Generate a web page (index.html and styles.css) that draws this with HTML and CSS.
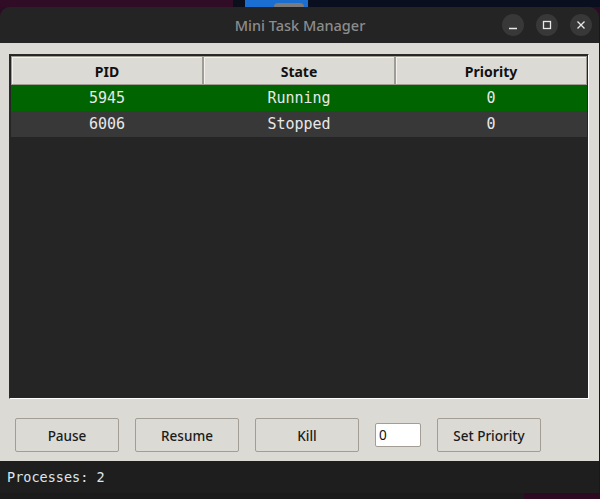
FILE: index.html
```html
<!DOCTYPE html>
<html>
<head>
<meta charset="utf-8">
<link rel="stylesheet" href="styles.css">
</head>
<body>
<div class="desktop">
  <div class="top-strip">
    <div class="seg seg-purple"></div>
    <div class="seg seg-navy"></div>
    <div class="seg seg-blue"><div class="blue-inner"></div></div>
    <div class="seg seg-navy2"></div>
  </div>
  <div class="window">
    <div class="titlebar">
      <div></div>
      <div class="title">Mini Task Manager</div>
      <div class="controls">
        <span class="ctl"><svg width="22" height="22" viewBox="0 0 22 22"><path d="M7 14.5h8" stroke="#e8e8e8" stroke-width="1.3" fill="none"/></svg></span>
        <span class="ctl"><svg width="22" height="22" viewBox="0 0 22 22"><rect x="7.5" y="7.5" width="7" height="7" stroke="#e8e8e8" stroke-width="1.3" fill="none"/></svg></span>
        <span class="ctl"><svg width="22" height="22" viewBox="0 0 22 22"><path d="M7.5 7.5l7 7M14.5 7.5l-7 7" stroke="#e8e8e8" stroke-width="1.3" fill="none"/></svg></span>
      </div>
    </div>
    <div class="content">
      <div class="tree">
        <div class="tree-head">
          <div class="th">PID</div>
          <div class="th">State</div>
          <div class="th">Priority</div>
        </div>
        <div class="tree-body">
          <div class="tr tr-selected">
            <div class="td">5945</div>
            <div class="td">Running</div>
            <div class="td">0</div>
          </div>
          <div class="tr tr-alt">
            <div class="td">6006</div>
            <div class="td">Stopped</div>
            <div class="td">0</div>
          </div>
        </div>
      </div>
      <div class="actions">
        <button class="btn">Pause</button>
        <button class="btn">Resume</button>
        <button class="btn">Kill</button>
        <input class="entry" type="text" value="0">
        <button class="btn">Set Priority</button>
      </div>
    </div>
    <div class="statusbar">Processes: 2</div>
  </div>
  <div class="bottom-strip">
    <div class="seg bseg-dark"></div>
    <div class="seg bseg-purple"></div>
  </div>
</div>
</body>
</html>
```
FILE: styles.css
```css
* { box-sizing: border-box; }
html, body { margin: 0; padding: 0; }
body { background: #2c0b24; width: 600px; height: 499px; overflow: hidden; }

.desktop { display: flex; flex-direction: column; width: 600px; height: 499px; }

.top-strip { display: flex; height: 7px; }
.seg { height: 100%; }
.seg-purple { width: 233px; background: #300c27; }
.seg-navy { width: 12px; background: #0b0f1c; }
.seg-blue { width: 63px; background: #1b6fd2; display: flex; justify-content: flex-end; align-items: flex-end; padding-right: 4px; }
.blue-inner { width: 30px; height: 4px; background: #7b7b7b; border-radius: 4px 4px 0 0; }
.seg-navy2 { flex: 1; background: #0a0f1f; }

.window { width: 599px; height: 486px; display: flex; flex-direction: column; border-radius: 10px 10px 0 0; overflow: hidden; background: #242424; }

.titlebar { height: 36px; flex: none; background: #242424; display: grid; grid-template-columns: 1fr auto 1fr; align-items: center; }
.title { font-family: "Noto Sans", "Open Sans", sans-serif; font-size: 14.5px; font-weight: 500; color: #8c8c8c; padding-left: 1px; }
.controls { display: flex; justify-content: flex-end; gap: 12px; padding-right: 7px; }
.ctl { width: 22px; height: 22px; border-radius: 50%; background: #383838; display: flex; }

.content { height: 418px; flex: none; background: #dcdad5; padding: 11px 10px 0 9px; display: flex; flex-direction: column; }

.tree { width: 580px; height: 345px; border: 1px solid; border-color: #2a2a2a #ffffff #ffffff #2a2a2a; padding: 1px; display: flex; flex-direction: column; background: #252525; }
.tree-head { display: grid; grid-template-columns: 192px 192px 192px; height: 29px; background: #dcdad5; }
.th { border: 1px solid #a09c94; box-shadow: inset 1px 1px 0 #f2f1ee; display: flex; align-items: center; justify-content: center; font-family: "Noto Sans", "Open Sans", sans-serif; font-weight: 700; font-size: 14px; color: #111; padding-top: 1px; }
.tree-body { flex: 1; background: #252525; }
.tr { display: grid; grid-template-columns: 192px 192px 192px; height: 26px; align-items: center; }
.tr-selected { background: #006400; }
.tr-alt { background: #383838; }
.td { text-align: center; font-family: "DejaVu Sans Mono", monospace; font-size: 15px; color: #e8e8e8; }

.actions { display: flex; align-items: center; gap: 16px; margin-top: 19px; padding-left: 6px; }
.btn { width: 104px; height: 34px; margin: 0; border: 1px solid #a29e96; border-radius: 2px; background: #dcdad5; font-family: "Noto Sans", "Open Sans", sans-serif; font-size: 13.5px; font-weight: 500; color: #1b1b1b; padding: 2px 0 0 0; }
.entry { width: 46px; height: 24px; margin: 0; border: 1px solid #a29e96; border-radius: 2px; background: #ffffff; font-family: "Noto Sans", "Open Sans", sans-serif; font-size: 13.5px; color: #111; padding: 0 3px; outline: none; }

.statusbar { height: 32px; flex: none; background: #1e1e1e; font-family: "DejaVu Sans Mono", monospace; font-size: 13.5px; color: #dde6ef; padding-left: 7px; display: flex; align-items: center; }

.bottom-strip { display: flex; height: 6px; }
.bseg-dark { width: 524px; background: #1b1b1b; }
.bseg-purple { flex: 1; background: #2c0a22; }
```
